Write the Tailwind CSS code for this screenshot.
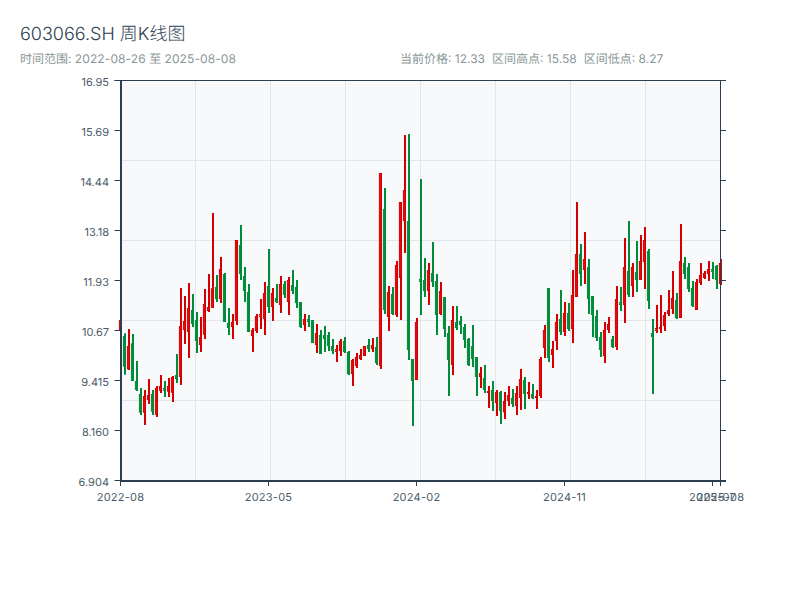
<!DOCTYPE html>
<html lang="zh-CN">
<head>
  <meta charset="UTF-8" />
  <meta name="viewport" content="width=device-width, initial-scale=1.0" />
  <title>603066.SH 周K线图</title>
  <script src="https://cdn.jsdelivr.net/npm/@tailwindcss/browser@4"></script>
</head>
<body class="bg-white font-['Inter','Noto_Sans_CJK_SC',sans-serif] [text-rendering:geometricPrecision]">
  <div class="w-[800px] h-[600px] overflow-hidden">
    <header class="px-5 pt-[21px] h-[60px]">
      <h1 class="text-[18px] leading-[28px] font-light text-[#2c3e50]">603066.SH 周K线图</h1>
      <div class="flex mt-[2px] text-[12px] leading-[16px] text-[#8a9798]">
        <div class="w-[380px]">时间范围: <span class="tracking-[0.1px]">2022-08-26</span> 至 <span class="tracking-[0.1px]">2025-08-08</span></div>
        <div class="flex gap-[7px]">
          <span>当前价格: 12.33</span>
          <span>区间高点: 15.58</span>
          <span>区间低点: 8.27</span>
        </div>
      </div>
    </header>
    <svg id="chart" width="800" height="540" viewBox="0 60 800 540" class="block text-[11px]">
      <rect x="120" y="80" width="600" height="400" class="fill-[#f8f9fa]" />
      <g id="grid" class="stroke-[#e2e5e9]"></g>
      <g id="candles"></g>
      <g id="axes" class="stroke-[#2c3e50]"></g>
      <g id="labels" class="fill-[#4a5a68]"></g>
    </svg>
  </div>

  <script>
    // [high, low, bodyTop, bodyBottom] per week, read off at 3x, y = y0 + v / 3
    const panels = [
      { y0: 200, rows: [
        'r360,395,360,393', 'g400,524,408,500', 'r387,510,438,508', 'g402,543,430,543', 'g483,573,543,570',
        'g564,645,582,638', 'r570,675,588,638', 'r537,612,585,600', 'g570,645,582,635', 'r558,651,564,644',
        'r525,579,558,572', 'g543,591,564,573', 'r534,591,558,575', 'r528,606,531,578', 'g462,549,525,537',
        'r264,555,378,531', 'r288,432,363,390', 'r249,474,324,396', 'g282,381,330,372', 'g336,459,360,423',
        'r351,456,411,435', 'r267,417,312,404', 'r222,336,321,333', 'r39,324,265,323', 'g225,306,261,297',
        'r171,309,207,297', 'g219,366,222,366', 'g324,405,369,384', 'r342,417,366,381', 'r120,375,120,363',
        'g75,240,135,222', 'g201,306,228,273', 'g252,396,276,396', 'r384,456,390,408', 'r342,399,348,393',
        'r297,387,342,351', 'r246,405,279,357', 'g147,339,258,321'
      ] },
      { y0: 130, rows: [
        'r474,573,489,531', 'g462,519,504,516', 'r438,549,462,525', 'g453,504,462,495', 'r441,555,450,516',
        'g420,492,465,483', 'g450,534,471,519', 'g516,594,516,591', 'r552,603,567,585', 'g555,591,567,576',
        'g570,639,570,639', 'r582,669,609,645', 'g600,672,615,672', 'g588,666,615,627', 'g606,663,615,648',
        'g627,672,648,663', 'r645,696,657,666', 'r627,678,633,663', 'g621,669,633,666', 'g663,735,666,732',
        'r687,768,690,732', 'r669,714,681,708', 'r657,690,675,687', 'r648,678,648,678', 'g627,666,645,657',
        'r624,666,645,657', 'g621,705,651,699', 'r129,717,129,708', 'g174,552,237,540', 'r468,603,486,561',
        'g471,555,492,552', 'r393,561,405,555', 'r216,570,216,444', 'r15,369,180,273', 'g12,690,273,660',
        'g687,888,687,753', 'r564,750,576,750', 'g147,555,447,456', 'g384,501,450,483', 'r399,525,420,483'
      ] },
      { y0: 170, rows: [
        'g216,351,309,336', 'g312,495,333,435', 'r336,435,363,432', 'g381,501,381,477', 'g468,678,489,570',
        'r408,615,450,585', 'g408,480,456,474', 'g438,492,453,465', 'g462,534,471,510', 'g504,588,507,585',
        'g465,591,528,567', 'g561,678,561,621', 'r591,654,609,621', 'g585,669,624,660', 'r648,714,663,669',
        'g633,723,660,693', 'r660,738,666,699', 'g663,762,666,723', 'r666,747,693,727', 'r648,708,675,693',
        'g657,711,684,702', 'r648,735,669,708', 'r597,720,627,684', 'g621,717,630,672', 'r636,687,666,672',
        'g642,687,672,684', 'r660,717,678,684', 'r561,684,567,678', 'r465,564,480,534', 'g354,576,354,564',
        'r513,594,537,555', 'r432,540,456,513', 'g360,495,447,486', 'r396,498,429,486', 'g399,483,429,477'
      ] },
      { y0: 190, rows: [
        'r240,459,315,417', 'r36,321,192,321', 'g162,288,192,252', 'r126,282,207,240', 'g207,372,231,327',
        'g318,441,318,375', 'g360,453,378,444', 'g426,501,441,480', 'r396,519,420,498', 'r381,429,402,420',
        'g438,474,447,471', 'r288,480,327,471', 'g291,363,336,345', 'r144,399,231,345', 'g93,321,243,315',
        'r219,321,231,288', 'g153,306,246,270', 'r135,270,213,270', 'r111,297,150,216', 'g177,357,183,333',
        'g387,612,429,441', 'r345,429,414,423', 'r315,429,411,417', 'r366,423,375,408', 'r300,378,360,372',
        'r243,372,324,357', 'g309,387,330,384', 'r102,384,213,384', 'g201,267,219,252', 'g219,306,231,297',
        'g273,351,294,348', 'r267,360,276,360', 'r219,285,255,279', 'r243,267,249,264', 'r213,273,237,252',
        'g216,267,237,246', 'g225,297,228,270', 'r207,285,219,282'
      ] }
    ];

    const svgNs = 'http://www.w3.org/2000/svg';
    function add(parent, tag, attrs, text) {
      const el = document.createElementNS(svgNs, tag);
      for (const k in attrs) el.setAttribute(k, attrs[k]);
      if (text) el.textContent = text;
      parent.appendChild(el);
      return el;
    }

    const grid = document.getElementById('grid');
    for (const x of [195, 270, 345, 420, 495, 570, 645]) {
      add(grid, 'line', { x1: x + 0.5, x2: x + 0.5, y1: 80, y2: 480 });
    }
    for (const y of [160, 240, 320, 400]) {
      add(grid, 'line', { x1: 120, x2: 720, y1: y + 0.5, y2: y + 0.5 });
    }

    const candles = document.getElementById('candles');
    let i = 0;
    panels.forEach(panel => {
      panel.rows.forEach(row => {
        const up = row[0] === 'r';
        const [hi, lo, top, bot] = row.slice(1).split(',').map(v => panel.y0 + v / 3);
        const x = 121 + i * 4;
        add(candles, 'rect', { x: x - 1, y: hi, width: 2, height: lo - hi, fill: up ? '#d40000' : '#008c3a' });
        add(candles, 'rect', {
          x: x - 1.6, y: top + 0.5, width: 1.6, height: Math.max(bot - top - 1, 0.5),
          fill: up ? '#f81020' : '#008c3a', stroke: up ? '#d40000' : '#008c3a'
        });
        i++;
      });
    });

    const axes = document.getElementById('axes');
    const labels = document.getElementById('labels');
    add(axes, 'path', { d: 'M114.5 80.5H720.5V480.5', fill: 'none' });
    add(axes, 'path', { d: 'M121 80V482M120 481H726', fill: 'none', 'stroke-width': 2 });
    ['16.95', '15.69', '14.44', '13.18', '11.93', '10.67', '9.415', '8.160', '6.904'].forEach((t, n) => {
      const y = 80.5 + n * 50;
      add(axes, 'line', { x1: 114.5, x2: 120, y1: y, y2: y });
      add(axes, 'line', { x1: 720, x2: 726, y1: y, y2: y });
      add(labels, 'text', { x: 109, y: y + 5, 'text-anchor': 'end' }, t);
    });
    [[120.5, '2022-08'], [268.5, '2023-05'], [416.5, '2024-02'], [564.5, '2024-11'], [712.5, '2025-07'], [720.5, '2025-08']].forEach(([x, t]) => {
      add(axes, 'line', { x1: x, x2: x, y1: 481, y2: 486 });
      add(labels, 'text', { x: x, y: 501, 'text-anchor': 'middle', class: 'tracking-[0.25px]' }, t);
    });
  </script>
</body>
</html>
